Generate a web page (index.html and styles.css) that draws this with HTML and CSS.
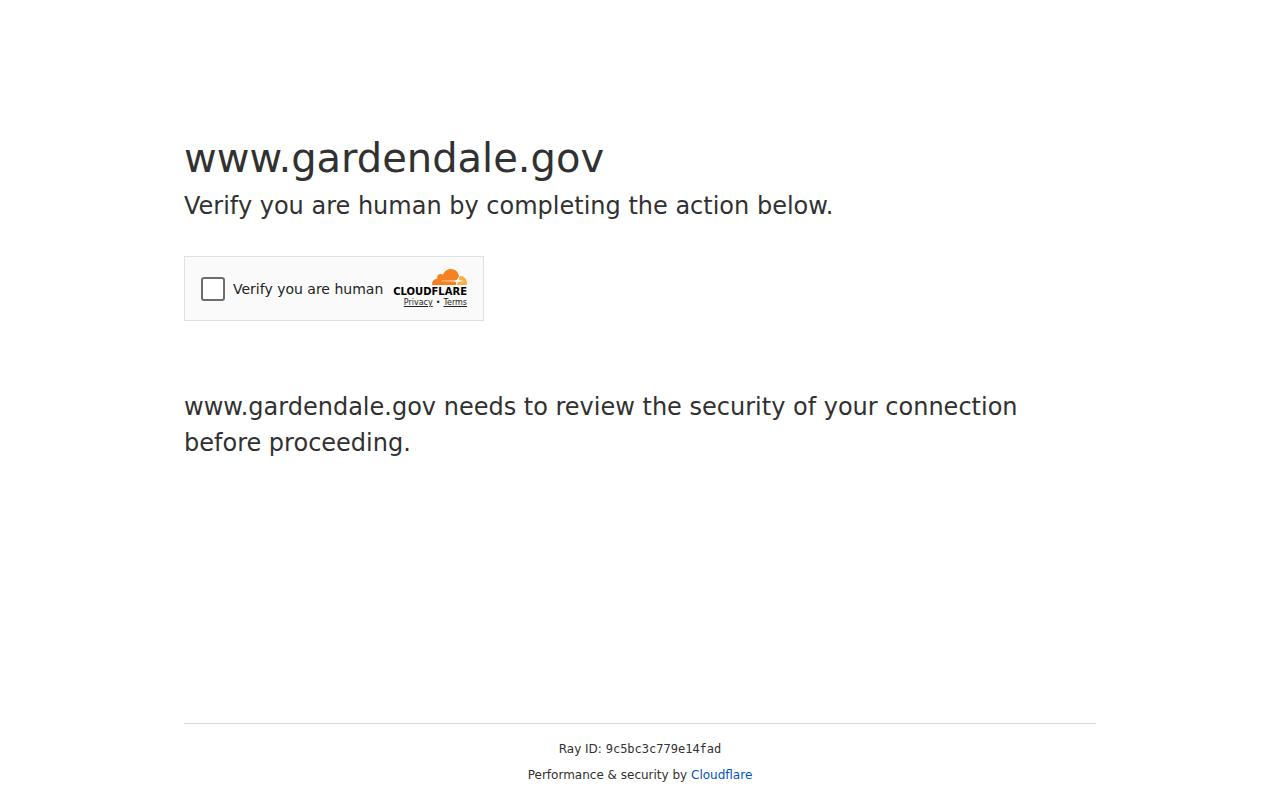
FILE: index.html
```html
<!DOCTYPE html>
<html lang="en">

<head>
    <meta charset="UTF-8">
    <meta name="viewport" content="width=device-width, initial-scale=1.0">
    <title>Just a moment...</title>
    <link rel="stylesheet" href="styles.css">
</head>

<body>
    <main class="main-content">
        <h1>www.gardendale.gov</h1>
        <p class="lead">Verify you are human by completing the action below.</p>

        <div class="widget">
            <input type="checkbox" id="verify" class="verify-box">
            <label for="verify">Verify you are human</label>
            <div class="branding">
                <svg class="cloud" viewBox="38 0 35 16" aria-hidden="true">
                    <path fill="#F6821F" d="M61.885 15.784L62.063 15.158C62.276 14.413 62.197 13.724 61.84 13.218C61.512 12.752 60.965 12.477 60.301 12.445L47.72 12.284C47.6 12.28 47.52 12.22 47.481 12.065C47.48 11.88 47.6 11.74 47.786 11.72L60.483 11.557C61.989 11.486 63.62 10.246 64.19 8.734L64.915 6.814C64.944 6.732 64.951 6.644 64.934 6.56C64.112 2.807 60.812 0 56.865 0C53.229 0 50.142 2.382 49.035 5.692C48.286 5.122 47.354 4.86 46.423 4.958C44.679 5.134 43.276 6.559 43.103 8.33C43.059 8.772 43.092 9.218 43.199 9.649C40.35 9.733 38.065 12.103 38.065 15.015C38.065 15.275 38.084 15.535 38.121 15.792C38.129 15.92 38.23 16 38.363 16L61.589 16C61.73 16 61.85 15.92 61.885 15.784Z"/>
                    <path fill="#FBAD41" d="M66.076 6.953C65.959 6.953 65.843 6.956 65.727 6.962C65.64 6.97 65.57 7.02 65.546 7.11L65.052 8.843C64.839 9.588 64.918 10.277 65.275 10.783C65.603 11.249 66.15 11.523 66.814 11.555L69.496 11.719C69.62 11.73 69.71 11.8 69.728 11.936C69.73 12.12 69.6 12.26 69.424 12.282L66.637 12.445C65.124 12.516 63.494 13.756 62.923 15.268L62.722 15.802C62.69 15.9 62.75 16 62.854 16H72.444C72.56 16 72.65 15.94 72.689 15.825C72.859 15.21 72.945 14.574 72.944 13.935C72.944 10.08 69.869 6.953 66.076 6.953Z"/>
                </svg>
                <span class="wordmark">CLOUDFLARE</span>
                <div class="terms">
                    <a href="#">Privacy</a><span class="dot">•</span><a href="#">Terms</a>
                </div>
            </div>
        </div>

        <p class="lead">www.gardendale.gov needs to review the security of your connection before proceeding.</p>
    </main>

    <footer class="footer">
        <div class="footer-inner">
            <div>Ray ID: <code>9c5bc3c779e14fad</code></div>
            <div>Performance &amp; security by <a href="#">Cloudflare</a></div>
        </div>
    </footer>
</body>

</html>
```
FILE: styles.css
```css
* {
    box-sizing: border-box;
    margin: 0;
    padding: 0;
}

body {
    display: flex;
    flex-direction: column;
    min-height: 100vh;
    font-family: "DejaVu Sans", sans-serif;
    background-color: #fff;
    color: #313131;
}

.main-content {
    flex: 1;
    width: 100%;
    max-width: 960px;
    margin: 0 auto;
    padding: 128px 24px 32px;
}

h1 {
    font-size: 40px;
    font-weight: 500;
    line-height: 60px;
}

.lead {
    font-size: 24px;
    line-height: 36px;
}

/* Verification widget */
.widget {
    display: flex;
    align-items: center;
    gap: 8px;
    width: 300px;
    height: 65px;
    margin: 32px 0 68px;
    padding: 0 16px;
    border: 1px solid #e0e0e0;
    background-color: #fafafa;
    color: #232323;
    font-size: 14px;
}

.verify-box {
    appearance: none;
    width: 24px;
    height: 24px;
    border: 2px solid #6d6d6d;
    border-radius: 3px;
    background-color: #fff;
    cursor: pointer;
}

.verify-box:checked {
    background-color: #6d6d6d;
}

.widget label {
    white-space: nowrap;
    cursor: pointer;
}

.branding {
    display: flex;
    flex-direction: column;
    align-items: flex-end;
    margin-left: auto;
}

.cloud {
    width: 35px;
    height: 16px;
}

.wordmark {
    color: #000;
    font-size: 10px;
    font-weight: bold;
    line-height: 13px;
}

.terms {
    display: flex;
    gap: 3px;
    font-size: 8px;
    line-height: 10px;
}

.terms a {
    color: #232323;
}

/* Footer */
.footer {
    padding: 0 24px;
    font-size: 12px;
    line-height: 18px;
    text-align: center;
}

.footer-inner {
    display: flex;
    flex-direction: column;
    gap: 8px;
    max-width: 912px;
    margin: 0 auto;
    padding: 16px 0;
    border-top: 1px solid #d9d9d9;
}

.footer code {
    font-family: "DejaVu Sans Mono", monospace;
}

.footer a {
    color: #0051c3;
    text-decoration: none;
}
```
